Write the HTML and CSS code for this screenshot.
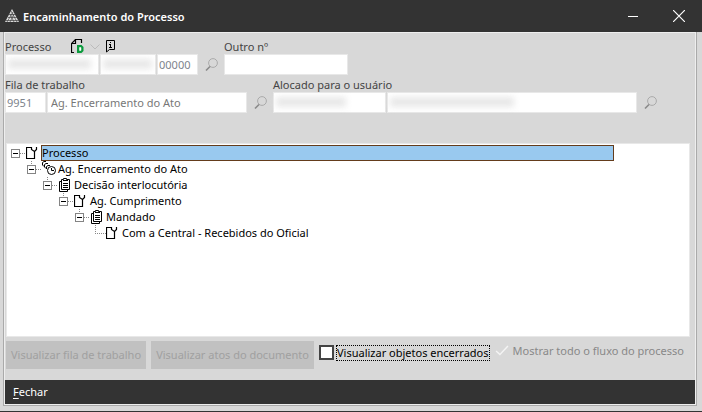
FILE: index.html
```html
<!DOCTYPE html>
<html lang="pt-BR">
<head>
    <meta charset="UTF-8">
    <meta name="viewport" content="width=device-width, initial-scale=1.0">
    <title>Encaminhamento do Processo</title>
    <link rel="stylesheet" href="styles.css">
</head>
<body>
    <svg class="sprite" aria-hidden="true">
        <symbol id="lupa" viewBox="0 0 14 14">
            <circle cx="8" cy="5" r="4.4" fill="none" stroke="#aaa"/>
            <path d="M5 8.5 1 12.5" stroke="#888" stroke-width="1.6"/>
        </symbol>
        <!-- caixa com sinal de menos e pontos ligando ao item -->
        <symbol id="no" viewBox="0 0 15 16">
            <path d="M4.5 0V4" stroke="#888" stroke-dasharray="1 1"/>
            <path d="M9 8.5H15" stroke="#888" stroke-dasharray="1 1"/>
            <rect x=".5" y="4.5" width="8" height="8" fill="#fff" stroke="#848484"/>
            <path d="M2 8.5H7" stroke="#000"/>
        </symbol>
        <symbol id="no-raiz" viewBox="0 0 15 16">
            <path d="M9 8.5H15" stroke="#888" stroke-dasharray="1 1"/>
            <rect x=".5" y="4.5" width="8" height="8" fill="#fff" stroke="#848484"/>
            <path d="M2 8.5H7" stroke="#000"/>
        </symbol>
        <symbol id="folha" viewBox="0 0 15 16">
            <path d="M4.5 0V8M4 8.5H15" fill="none" stroke="#888" stroke-dasharray="1 1"/>
        </symbol>
        <symbol id="pasta" viewBox="0 0 15 16">
            <path d="M6 2.5H.5V13.5H8.5V6.5L5.5 4.5V2M10.5 2V4.5L8.5 6.5" fill="none" stroke="#000" stroke-width="1.2"/>
        </symbol>
        <symbol id="fila" viewBox="0 0 15 16">
            <path d="M.5 4V1.5L2 .5H4M2.5 6V3.5L4 2.5H6M4.5 8V5.5L6 4.5H8M.5 4 2 5.5M2.5 6 4 7.5" fill="none" stroke="#000"/>
            <circle cx="9.5" cy="9.5" r="4" fill="#fff" stroke="#000"/>
            <path d="M9.5 7V9.5H12" fill="none" stroke="#000"/>
        </symbol>
        <symbol id="documentos" viewBox="0 0 15 16">
            <path d="M3.5 4.5H1.5V14.5H9.5V12.5" fill="none" stroke="#000"/>
            <path d="M3.5 2.5H5.5V1.5H8.5V2.5H11.5V12.5H3.5Z" fill="#fff" stroke="#000"/>
            <path d="M5 3.5H10M5 6.5H10M5 8.5H10M5 10.5H10" stroke="#000"/>
        </symbol>
    </svg>

    <header class="titulo">
        <svg class="logo" viewBox="0 0 14 14" aria-hidden="true">
            <path d="M7 0 14 13H0Z" fill="#ddd"/>
            <path d="M4 5.5H10M3 8.5H12M1 11.5H13M6 2 12 13M8 3 2 13M5 5 9 13M9 5 5 13" stroke="#444" stroke-width=".7"/>
        </svg>
        <h1>Encaminhamento do Processo</h1>
        <button class="janela-btn" aria-label="Minimizar">
            <svg viewBox="0 0 12 12"><path d="M1 6.5H11" stroke="#fff"/></svg>
        </button>
        <button class="janela-btn" aria-label="Sair">
            <svg viewBox="0 0 12 12"><path d="M0 0 12 12M12 0 0 12" stroke="#fff" stroke-width="1.2"/></svg>
        </button>
    </header>

    <main class="janela">
        <form class="dados">
            <div class="linha">
                <div class="grupo">
                    <div class="rotulo">
                        <label for="processo">Processo</label>
                        <button type="button" class="icone novo" aria-label="Novo documento">
                            <svg width="13" height="15" viewBox="0 0 13 15">
                                <path d="M3 13.5H.5V4.5L4.5.5H10.5V4M4.5.5V4.5H.5" fill="none" stroke="#000" stroke-width="1.2"/>
                                <path d="M6 6H10.5L12.5 8V12L10.5 14H6Z" fill="#0a9a3c"/>
                                <path d="M8.5 8.5H10V11.5H8.5Z" fill="#fff" stroke="#fff" stroke-width=".5"/>
                            </svg>
                        </button>
                        <button type="button" class="icone abrir" aria-label="Opções">
                            <svg width="10" height="14" viewBox="0 0 10 14"><path d="M.5 5.5 5 10 9.5 5.5" fill="none" stroke="#bbb"/></svg>
                        </button>
                        <button type="button" class="icone info" aria-label="Informações">
                            <svg width="9" height="13" viewBox="0 0 9 13">
                                <path d="M.5.5H8.5V9.5H3.5L.5 12Z" fill="none" stroke="#000"/>
                                <path d="M4.5 2V3M4.5 4V8M3 7.5H6M3 4.5H5" stroke="#000"/>
                            </svg>
                        </button>
                    </div>
                    <div class="campos">
                        <div class="oculto numero"><input id="processo" type="text" readonly></div>
                        <div class="oculto ano"><input type="text" aria-label="Ano" readonly></div>
                        <input class="codigo" type="text" aria-label="Dependente" value="00000">
                        <button type="button" class="icone busca" aria-label="Buscar processo"><svg width="14" height="14"><use href="#lupa"/></svg></button>
                    </div>
                </div>
                <div class="grupo">
                    <label class="rotulo" for="outro">Outro nº</label>
                    <input class="outro" id="outro" type="text">
                </div>
            </div>

            <div class="linha">
                <div class="grupo">
                    <label class="rotulo" for="fila-codigo">Fila de trabalho</label>
                    <div class="campos">
                        <input class="codigo" id="fila-codigo" type="text" value="9951">
                        <input class="nome" type="text" aria-label="Nome da fila" value="Ag. Encerramento do Ato">
                        <button type="button" class="icone busca" aria-label="Buscar fila"><svg width="14" height="14"><use href="#lupa"/></svg></button>
                    </div>
                </div>
                <div class="grupo usuario">
                    <label class="rotulo" for="usuario">Alocado para o usuário</label>
                    <div class="campos">
                        <div class="oculto login"><input id="usuario" type="text" readonly></div>
                        <div class="oculto pessoa"><input type="text" aria-label="Nome do usuário" readonly></div>
                        <button type="button" class="icone busca" aria-label="Buscar usuário"><svg width="14" height="14"><use href="#lupa"/></svg></button>
                    </div>
                </div>
            </div>
        </form>

        <div class="arvore">
            <ul>
                <li>
                    <div class="item selecionado"><svg><use href="#no-raiz"/></svg><svg><use href="#pasta"/></svg><span>Processo</span></div>
                    <ul>
                        <li>
                            <div class="item"><svg><use href="#no"/></svg><svg><use href="#fila"/></svg><span>Ag. Encerramento do Ato</span></div>
                            <ul>
                                <li>
                                    <div class="item"><svg><use href="#no"/></svg><svg><use href="#documentos"/></svg><span>Decisão interlocutória</span></div>
                                    <ul>
                                        <li>
                                            <div class="item"><svg><use href="#no"/></svg><svg><use href="#pasta"/></svg><span>Ag. Cumprimento</span></div>
                                            <ul>
                                                <li>
                                                    <div class="item"><svg><use href="#no"/></svg><svg><use href="#documentos"/></svg><span>Mandado</span></div>
                                                    <ul>
                                                        <li>
                                                            <div class="item"><svg><use href="#folha"/></svg><svg><use href="#pasta"/></svg><span>Com a Central - Recebidos do Oficial</span></div>
                                                        </li>
                                                    </ul>
                                                </li>
                                            </ul>
                                        </li>
                                    </ul>
                                </li>
                            </ul>
                        </li>
                    </ul>
                </li>
            </ul>
        </div>

        <div class="acoes">
            <button class="btn btn-fila" disabled>Visualizar fila de trabalho</button>
            <button class="btn btn-atos" disabled>Visualizar atos do documento</button>
            <div class="opcao">
                <input type="checkbox" id="encerrados">
                <label class="foco" for="encerrados">Visualizar objetos encerrados</label>
            </div>
            <div class="opcao inativa">
                <input type="checkbox" id="fluxo" checked disabled>
                <label for="fluxo">Mostrar todo o fluxo do processo</label>
            </div>
        </div>

        <footer class="rodape">
            <button class="fechar" accesskey="f"><u>F</u>echar</button>
        </footer>
    </main>
</body>
</html>
```

FILE: styles.css
```css
* {
    box-sizing: border-box;
}

body {
    margin: 0;
    min-height: 100vh;
    display: flex;
    flex-direction: column;
    background-color: #d8d8d8;
    border-bottom: 1px solid #333;
    font-family: "Noto Sans", "Open Sans", sans-serif;
    font-size: 11px;
    line-height: 16px;
    color: #444;
}

button, input {
    font: inherit;
    color: inherit;
    margin: 0;
    padding: 0;
    border: none;
    background: none;
}

svg {
    display: block;
}

.sprite {
    display: none;
}

/* barra de titulo */
.titulo {
    display: flex;
    align-items: center;
    height: 32px;
    padding-left: 5px;
    background-color: #333;
    color: #fff;
}

.logo {
    width: 14px;
    height: 14px;
}

.titulo h1 {
    flex: 1;
    margin: 2px 0 0 4px;
    font-size: 11px;
    font-weight: 600;
}

.janela-btn {
    display: flex;
    justify-content: center;
    align-items: center;
    width: 46px;
    height: 32px;
}

.janela-btn svg {
    width: 12px;
    height: 12px;
}

.janela {
    flex: 1;
    display: flex;
    flex-direction: column;
    margin: 0 5px 5px 3px;
    border: 1px solid #aaa;
    border-top: none;
    box-shadow: inset 0 0 0 1px #eee;
    padding: 0 1px 1px;
}

/* campos */
.dados {
    padding-top: 6px;
}

.linha {
    display: flex;
}

.linha + .linha {
    margin-top: 1px;
}

.rotulo {
    display: flex;
    align-items: center;
    height: 16px;
    padding-top: 2px;
}

.icone {
    display: flex;
}

.rotulo .icone {
    margin-bottom: 2px;
}

.novo {
    margin-left: 20px;
}

.abrir {
    margin-left: 6px;
}

.info {
    margin-left: 6px;
}

.campos {
    display: flex;
    gap: 1px;
}

.dados input {
    display: block;
    height: 21px;
    padding: 0 3px;
    border: 1px solid #e8e8e8;
    background-color: #fff;
    color: #777;
}

.dados .codigo {
    width: 41px;
    padding: 0 1px;
    color: #7d838c;
}

.dados .nome {
    width: 200px;
}

.dados .outro {
    width: 124px;
}

.busca {
    align-items: center;
    width: 25px;
    height: 21px;
    padding-left: 6px;
}

/* campos com conteudo desfocado */
.oculto {
    position: relative;
}

.oculto input {
    width: 100%;
}

.oculto::after {
    content: "";
    position: absolute;
    top: 5px;
    left: 3px;
    width: 88%;
    height: 10px;
    background-color: #e8e8e8;
    filter: blur(3px);
}

.numero {
    width: 94px;
}

.ano {
    width: 56px;
}

.usuario {
    flex: 1;
    padding-right: 32px;
}

.login {
    width: 113px;
}

.login::after {
    width: 70px;
}

.pessoa {
    flex: 1;
}

.pessoa::after {
    width: 124px;
}

/* arvore */
.arvore {
    flex: 1;
    margin: 30px 5px 0 1px;
    padding: 1px 4px;
    border: 1px solid #e8e8e8;
    background-color: #fff;
    color: #000;
}

.arvore ul {
    list-style: none;
    margin: 0;
    padding: 0;
}

.arvore ul ul {
    padding-left: 16px;
}

.item {
    display: flex;
    height: 16px;
}

.item svg {
    flex: none;
    width: 15px;
    height: 16px;
}

.item span {
    padding: 0 1px;
}

.selecionado span {
    width: 85%;
    padding: 0;
    border: 1px solid #643c1c;
    background-color: #99c9ef;
    line-height: 14px;
}

/* acoes */
.acoes {
    display: flex;
    gap: 5px;
    margin: 4px 0 11px 1px;
}

.btn {
    height: 28px;
    background-color: #c1c1c1;
    color: #a0a0a0;
}

.btn-fila {
    width: 140px;
}

.btn-atos {
    width: 163px;
}

.opcao {
    display: flex;
    align-items: center;
    gap: 2px;
    height: 23px;
    color: #000;
}

.opcao input {
    appearance: none;
    width: 15px;
    height: 15px;
    border: 2px solid #444;
    background-color: #fff;
}

.foco {
    padding: 0 1px;
    outline: 1px dotted #000;
    outline-offset: -1px;
}

.inativa {
    gap: 3px;
    height: 20px;
    color: #888;
}

.inativa input {
    border: none;
    background-color: #f4f4f4;
    clip-path: polygon(7% 53%, 36% 80%, 93% 20%, 86% 14%, 36% 66%, 13% 46%);
}

/* rodape */
.rodape {
    display: flex;
    height: 24px;
    padding-left: 8px;
    background-color: #333;
    color: #fff;
}

.fechar u {
    text-underline-offset: 2px;
}
```
